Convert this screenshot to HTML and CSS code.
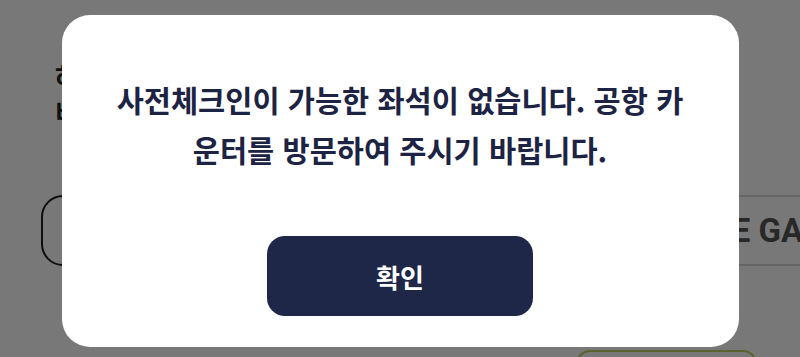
FILE: index.html
```html
<!DOCTYPE html>
<html lang="ko">
<head>
  <meta charset="UTF-8">
  <title>사전체크인</title>
  <link rel="stylesheet" href="styles.css">
</head>
<body>

<div class="page">
  <div class="notice">
    <p>하단</p>
    <p>비상</p>
  </div>

  <div class="options">
    <div class="opt opt-left"></div>
    <div class="opt opt-right">THE GABLE</div>
  </div>

  <div class="next-row">
    <div class="next-box"></div>
  </div>
</div>

<div class="overlay">
  <div class="modal">
    <p class="modal-text">사전체크인이 가능한 좌석이 없습니다. 공항 카운터를 방문하여 주시기 바랍니다.</p>
    <button type="button" class="modal-btn">확인</button>
  </div>
</div>

</body>
</html>
```

FILE: styles.css
```css
html, body {
  margin: 0;
  width: 800px;
  height: 357px;
  overflow: hidden;
  background-color: #ffffff;
  font-family: "Noto Sans CJK KR", "Noto Sans", sans-serif;
}
.page {
  padding-top: 58px;
}
.notice {
  padding-left: 55px;
  color: #222;
  font-size: 26px;
  font-weight: 700;
  line-height: 36px;
}
.notice p {
  margin: 0;
  white-space: nowrap;
}
.options {
  display: flex;
  margin-top: 65px;
  height: 71px;
}
.opt {
  box-sizing: border-box;
  height: 71px;
  flex-shrink: 0;
}
.opt-left {
  margin-left: 41px;
  width: 300px;
  border: 2px solid #1e1e1e;
  border-radius: 22px;
}
.opt-right {
  margin-left: 220px;
  width: 420px;
  border-top: 2px solid #d4d4d4;
  border-bottom: 2px solid #d4d4d4;
  display: flex;
  align-items: center;
  padding-left: 127px;
  font-family: Roboto, "Liberation Sans", sans-serif;
  font-size: 33px;
  font-weight: 700;
  color: #555;
  white-space: nowrap;
}
.next-row {
  padding-left: 576px;
  margin-top: 84px;
}
.next-box {
  width: 181px;
  height: 60px;
  box-sizing: border-box;
  border: 2px solid #c2d060;
  border-radius: 14px;
}
.overlay {
  position: fixed;
  inset: 0;
  background-color: rgba(0, 0, 0, 0.53);
  display: flex;
  justify-content: center;
  align-items: flex-start;
  padding-top: 15px;
}
.modal {
  box-sizing: border-box;
  width: 677px;
  height: 332px;
  background-color: #ffffff;
  border-radius: 28px;
  padding: 59px 44px 0;
  display: flex;
  flex-direction: column;
  align-items: center;
}
.modal-text {
  margin: 0;
  color: #1d2342;
  font-size: 29.5px;
  font-weight: 700;
  line-height: 50px;
  text-align: center;
}
.modal-btn {
  margin-top: 62px;
  width: 266px;
  height: 80px;
  border: none;
  border-radius: 18px;
  background-color: #1e2748;
  color: #ffffff;
  font-family: "Noto Sans CJK KR", "Noto Sans", sans-serif;
  font-size: 26px;
  font-weight: 700;
  cursor: pointer;
}
```
